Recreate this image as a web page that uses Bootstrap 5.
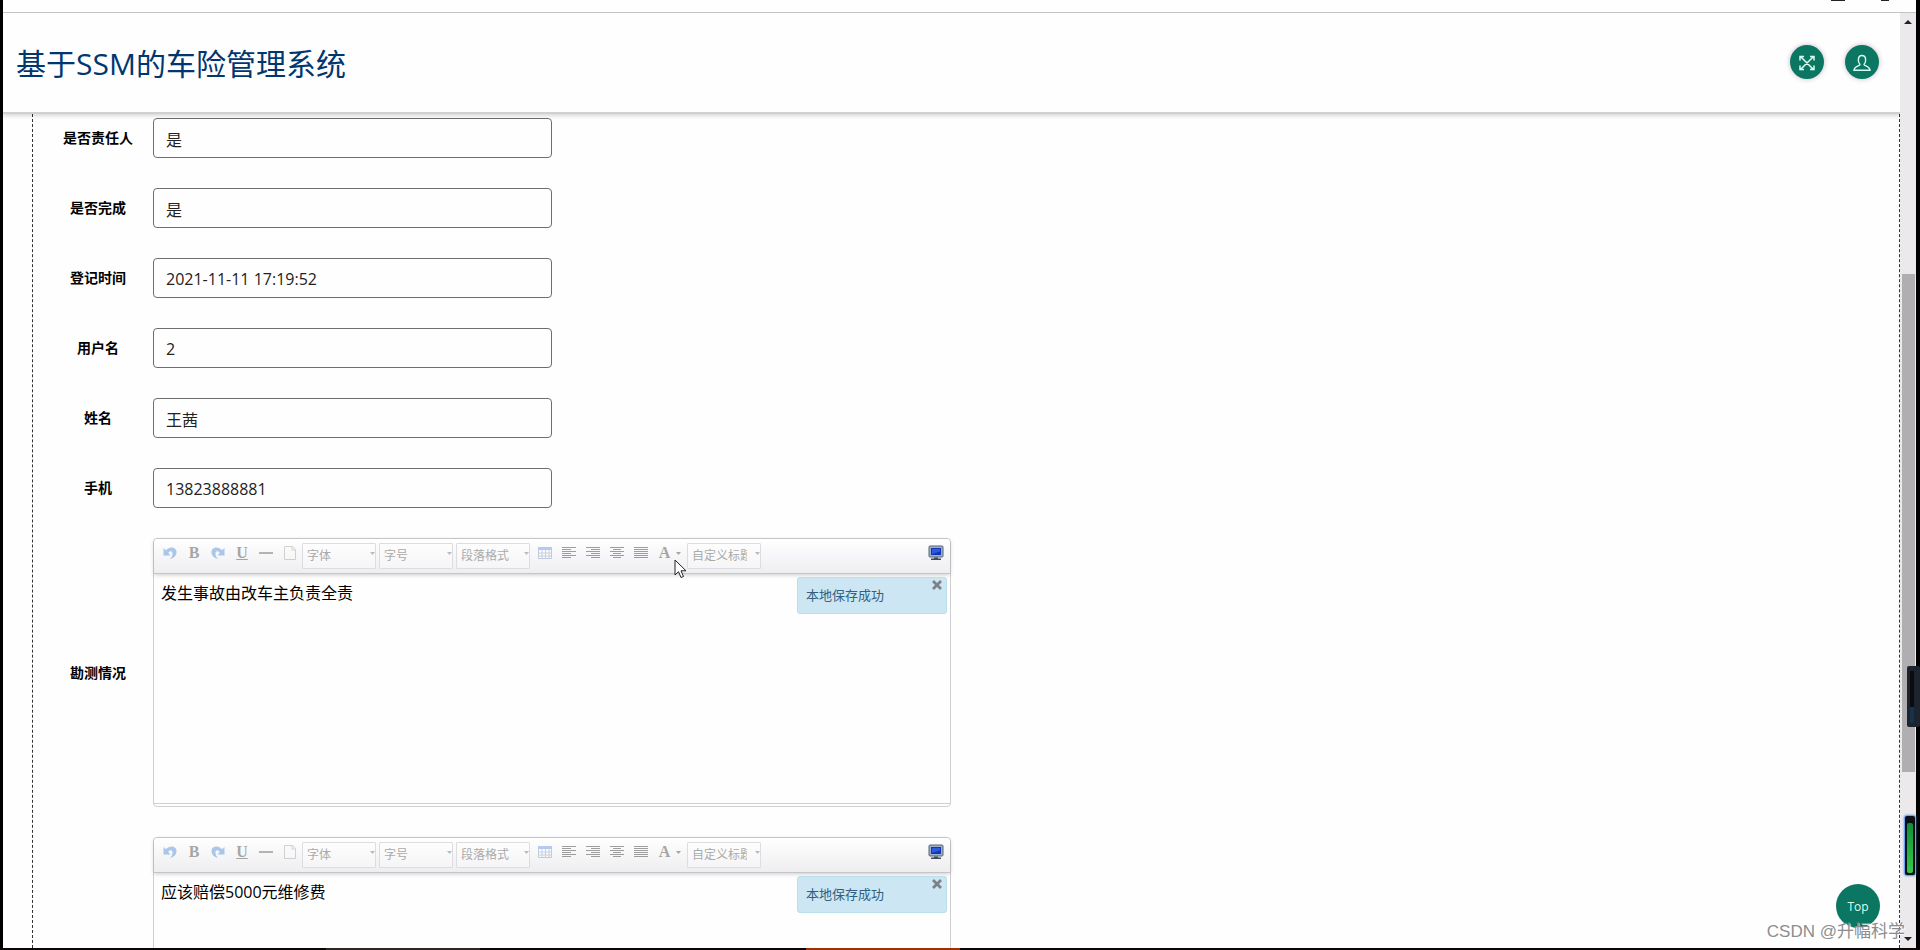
<!DOCTYPE html>
<html lang="zh-CN">
<head>
<meta charset="utf-8">
<meta name="viewport" content="width=device-width, initial-scale=1">
<title>基于SSM的车险管理系统</title>
<link href="https://cdn.jsdelivr.net/npm/bootstrap@5.3.0/dist/css/bootstrap.min.css" rel="stylesheet">
<style>
  body { font-family: "Open Sans", "Noto Sans CJK SC", sans-serif; color: #000; background: #000; }
  .screen { background: #fefefe; margin-left: 3px; margin-right: 4px; min-height: 0; }
  .browser-edge { height: 13px; border-bottom: 1px solid #c4c4c8; flex: none; }
  .tab-bits { gap: 36px; padding-right: 27px; }
  .tab-bits i { width: 8px; height: 1px; background: #222; }
  .tab-bits i:first-child { width: 14px; }
  .site-header { height: 101px; padding: 0 21px 0 13px; background: #fefefe; border-bottom: 2px solid #d0d0d0; box-shadow: 0 2px 4px rgba(0,0,0,.15); z-index: 2; }
  .site-title { font-size: 30px; line-height: 40px; color: #003770; margin: 0; padding-top: 2px; }
  .header-actions { gap: 21px; padding-bottom: 2px; }
  .round-btn { width: 34px; height: 34px; padding: 0; border: 0; border-radius: 50%; background: #0b7763; color: #d8fff4; box-shadow: 0 0 5px rgba(60,20,60,.3); }
  .form-panel { margin-left: 29px; padding: 4px 0 0; border: dashed #333; border-width: 0 1px; }
  .field { margin-bottom: 30px; }
  .field-label { width: 120px; padding-left: 10px; text-align: center; font-size: 14px; font-weight: 700; line-height: 20px; flex: none; }
  .text-field { width: 399px; height: 40px; border: 1px solid #6e6e72; border-radius: 4px; padding: 1px 12px 0; font-size: 16px; color: #222; background: #fefefe; }
  .editor { width: 798px; border: 1px solid #d0ced2; border-radius: 4px; background: #fefefe; flex: none; }
  .editor-tools { height: 35px; padding: 0 2px 6px 4px; background: linear-gradient(#fff, #eeedf0); border-bottom: 1px solid #c6c4c8; border-radius: 4px 4px 0 0; box-shadow: 0 1px 4px rgba(0,0,0,.2); }
  .tool { width: 24px; height: 24px; padding: 0; border: 0; background: none; opacity: .5; display: flex; align-items: center; justify-content: center; flex: none; }
  .tool.split { width: 34px; gap: 6px; }
  .tool.full { opacity: 1; }
  .tool-serif { font: 700 16px/20px "Liberation Serif", serif; color: #555; }
  .combo { width: 74px; height: 26px; margin: 3px 3px 0 0; position: relative; flex: none; }
  .combo select { width: 100%; height: 100%; padding: 0 13px 0 4px; border: 1px solid #dddce0; border-radius: 1px; background: rgba(255,255,255,.35); color: #aaa; font-size: 12px; line-height: 24px; appearance: none; }
  .combo svg { position: absolute; right: 1px; top: 10px; color: #bbb; }
  .editor-body { height: 230px; border-bottom: 1px solid #d0ced2; margin-bottom: 2px; padding: 7px; font-size: 16px; line-height: 24px; position: relative; }
  .notice { position: absolute; top: 3px; right: 3px; width: 150px; height: 37px; padding: 0 8px; border: 1px solid #b9dfea; border-radius: 3px; background: #cde6f3; color: #31617f; font-size: 13px; line-height: 34px; }
  .notice button { position: absolute; top: 1px; right: 3px; width: 12px; height: 12px; padding: 0; border: 0; background: none; display: flex; }
  .scroll-rail { width: 16px; background: #ebe9ec; flex: none; }
  .scroll-thumb { height: 498px; margin: 250px 1px 0 2px; background: #b0aeb1; }
  .scroll-arrow { width: 0; border: 4px solid transparent; }
  .arrow-up { border-bottom-color: #222; border-top: 0; margin: 7px auto 0 4px; }
  .arrow-down { border-top-color: #222; border-bottom: 0; margin: auto auto 7px 4px; }
  .gadget { position: absolute; border-radius: 2px; }
  .gadget-dark { top: 666px; right: 0; width: 13px; height: 61px; background: #1d242e; padding: 5px 6px 4px 3px; }
  .gadget-dark div { height: 100%; background: linear-gradient(#0a0c0f 70%, #17324c 70%); }
  .gadget-green { top: 816px; right: 5px; width: 10px; height: 59px; background: #0c1014; box-shadow: 0 0 2px 1px #3c8df0; padding: 7px 2px 2px; }
  .gadget-green div { height: 100%; background: linear-gradient(#0f9038, #37c94a); border-radius: 2px; }
  .to-top { position: absolute; right: 40px; bottom: 22px; width: 44px; height: 44px; padding: 2px 0 0; border: 0; border-radius: 50%; background: #0b7763; color: #d8fff4; font-size: 12px; z-index: 3; }
  .credit { position: absolute; right: 15px; bottom: 6px; font-family: "Liberation Sans", "Noto Sans CJK SC", sans-serif; font-size: 17px; line-height: 24px; color: #8d8d8f; text-shadow: 1px 1px 1px #fff; z-index: 3; }
  .task-strip { height: 2px; background: #0a0506; flex: none; }
  .task-strip .dim { width: 8%; margin-left: 17%; background: #2c2627; }
  .task-strip .hot { width: 8%; margin-left: 17%; background: #9a3206; }
  .pointer { position: absolute; left: 520px; top: 20px; z-index: 3; }
</style>
</head>
<body>
<svg class="d-none">
  <symbol id="i-undo" viewBox="0 0 16 16"><path d="M1.500 3v7.500h7L6.200 8C8 5.500 10.500 6 10.500 8.500c0 2.500-1 4-2.500 5.500 4-.8 6.500-3.500 6.500-7C14.500 1.800 7.500.8 4 5.300z" fill="#5d97dc"/></symbol>
  <symbol id="i-redo" viewBox="0 0 16 16"><path d="M14.500 3v7.500h-7L9.800 8C8 5.500 5.500 6 5.500 8.500c0 2.500 1 4 2.500 5.500-4-.8-6.500-3.500-6.500-7C1.500 1.800 8.500.8 12 5.300z" fill="#5d97dc"/></symbol>
  <symbol id="i-line" viewBox="0 0 16 16"><path d="M1 8h14" stroke="#444" stroke-width="1.500"/></symbol>
  <symbol id="i-page" viewBox="0 0 16 16"><path d="M2.500 1.500h8l3 3v10h-11zM10 1.500v3.500h3.500" fill="#fafafa" stroke="#aaa"/></symbol>
  <symbol id="i-table" viewBox="0 0 16 16"><path d="M1.500 2.500h13v11h-13z" fill="#fff" stroke="#8aa0c8"/><path d="M1 2h14v3H1z" fill="#6f9be8"/><path d="M1.500 8h13M1.500 11h13M5 5v8.500M8.500 5v8.500M12 5v8.500" stroke="#98a8c8"/></symbol>
  <symbol id="i-left" viewBox="0 0 16 16"><path d="M1 2.500h14M1 4.500h9M1 6.500h14M1 8.500h9M1 10.500h14M1 12.500h9" stroke="#444"/></symbol>
  <symbol id="i-right" viewBox="0 0 16 16"><path d="M1 2.500h14M6 4.500h9M1 6.500h14M6 8.500h9M1 10.500h14M6 12.500h9" stroke="#444"/></symbol>
  <symbol id="i-center" viewBox="0 0 16 16"><path d="M1 2.500h14M4 4.500h8M1 6.500h14M4 8.500h8M1 10.500h14M4 12.500h8" stroke="#444"/></symbol>
  <symbol id="i-justify" viewBox="0 0 16 16"><path d="M1 2.500h14M1 4.500h14M1 6.500h14M1 8.500h14M1 10.500h14M1 12.500h14" stroke="#444"/></symbol>
  <symbol id="i-screen" viewBox="0 0 16 16"><rect x="1" y="1" width="14" height="11" rx="1" fill="#9fb0c8" stroke="#56657c"/><path d="M3 3h10v7H3z" fill="#1237b0"/><path d="M4 4h8v2.500L4 9z" fill="#2c5be0"/><path d="M6 12.500h4v1H6zM3 13.500h10V15H3z" fill="#3e4c58"/></symbol>
  <symbol id="i-close" viewBox="0 0 12 12"><path d="M2 2l8 8M10 2l-8 8" stroke="#7d8086" stroke-width="2.800"/></symbol>
  <symbol id="i-caret" viewBox="0 0 5 3"><path d="M0 0h5L2.500 3z" fill="currentColor"/></symbol>
</svg>

<div class="vh-100 d-flex flex-column overflow-hidden position-relative">
  <div class="screen flex-fill d-flex flex-column overflow-hidden">
    <div class="browser-edge"><div class="tab-bits d-flex justify-content-end"><i></i><i></i></div></div>
    <div class="d-flex flex-fill overflow-hidden">
      <div class="flex-fill d-flex flex-column overflow-hidden">
        <header class="site-header d-flex align-items-center justify-content-between flex-shrink-0 position-relative">
          <h1 class="site-title fw-normal">基于SSM的车险管理系统</h1>
          <div class="header-actions d-flex">
            <button class="round-btn" type="button" aria-label="全屏"><svg width="16" height="16" viewBox="0 0 16 16" fill="none" stroke="currentColor" stroke-width="1.500"><path d="M2 2l12 12M14 2L2 14M1 5.500V1.500h4M11 1.500h4v4M15 10.500v4h-4M5 14.500H1v-4"/></svg></button>
            <button class="round-btn" type="button" aria-label="用户"><svg width="18" height="18" viewBox="0 0 18 18" fill="none" stroke="currentColor" stroke-width="1.400"><path d="M7 10.500C4.500 8 4.500 1.500 9 1.500s4.500 6.500 2 9c0 1.500 5.800 1.500 6 5.700H1c.2-4.200 6-4.200 6-5.700z"/></svg></button>
          </div>
        </header>
        <main class="form-panel flex-fill overflow-hidden">
          <form>
            <div class="field d-flex align-items-center"><label class="field-label" for="f1">是否责任人</label><input class="form-control text-field" id="f1" value="是"></div>
            <div class="field d-flex align-items-center"><label class="field-label" for="f2">是否完成</label><input class="form-control text-field" id="f2" value="是"></div>
            <div class="field d-flex align-items-center"><label class="field-label" for="f3">登记时间</label><input class="form-control text-field" id="f3" value="2021-11-11 17:19:52"></div>
            <div class="field d-flex align-items-center"><label class="field-label" for="f4">用户名</label><input class="form-control text-field" id="f4" value="2"></div>
            <div class="field d-flex align-items-center"><label class="field-label" for="f5">姓名</label><input class="form-control text-field" id="f5" value="王茜"></div>
            <div class="field d-flex align-items-center"><label class="field-label" for="f6">手机</label><input class="form-control text-field" id="f6" value="13823888881"></div>

            <div class="field d-flex align-items-center">
              <span class="field-label">勘测情况</span>
              <div class="editor position-relative">
                <div class="editor-tools d-flex align-items-center position-relative">
                  <button class="tool" type="button" aria-label="撤销"><svg width="16" height="16"><use href="#i-undo"/></svg></button>
                  <button class="tool tool-serif" type="button">B</button>
                  <button class="tool" type="button" aria-label="重做"><svg width="16" height="16"><use href="#i-redo"/></svg></button>
                  <button class="tool tool-serif text-decoration-underline" type="button">U</button>
                  <button class="tool" type="button" aria-label="分隔线"><svg width="16" height="16"><use href="#i-line"/></svg></button>
                  <button class="tool" type="button" aria-label="清空"><svg width="16" height="16"><use href="#i-page"/></svg></button>
                  <div class="combo"><select aria-label="字体"><option>字体</option></select><svg width="5" height="3"><use href="#i-caret"/></svg></div>
                  <div class="combo"><select aria-label="字号"><option>字号</option></select><svg width="5" height="3"><use href="#i-caret"/></svg></div>
                  <div class="combo"><select aria-label="段落格式"><option>段落格式</option></select><svg width="5" height="3"><use href="#i-caret"/></svg></div>
                  <button class="tool" type="button" aria-label="表格"><svg width="16" height="16"><use href="#i-table"/></svg></button>
                  <button class="tool" type="button" aria-label="左对齐"><svg width="16" height="16"><use href="#i-left"/></svg></button>
                  <button class="tool" type="button" aria-label="右对齐"><svg width="16" height="16"><use href="#i-right"/></svg></button>
                  <button class="tool" type="button" aria-label="居中"><svg width="16" height="16"><use href="#i-center"/></svg></button>
                  <button class="tool" type="button" aria-label="两端对齐"><svg width="16" height="16"><use href="#i-justify"/></svg></button>
                  <button class="tool split tool-serif" type="button">A<svg width="5" height="3"><use href="#i-caret"/></svg></button>
                  <div class="combo"><select aria-label="自定义标题"><option>自定义标题</option></select><svg width="5" height="3"><use href="#i-caret"/></svg></div>
                  <button class="tool full ms-auto" type="button" aria-label="全屏编辑"><svg width="16" height="16"><use href="#i-screen"/></svg></button>
                </div>
                <div class="editor-body">发生事故由改车主负责全责
                  <div class="notice">本地保存成功<button type="button" aria-label="关闭"><svg width="12" height="12"><use href="#i-close"/></svg></button></div>
                </div>
                <svg class="pointer" width="14" height="20" viewBox="0 0 14 20"><path d="M1 1v15l3.500-3.300L7 18.500l2.500-1-2.500-5.700h5z" fill="#fff" stroke="#222"/></svg>
              </div>
            </div>

            <div class="field d-flex align-items-center">
              <span class="field-label"></span>
              <div class="editor">
                <div class="editor-tools d-flex align-items-center position-relative">
                  <button class="tool" type="button" aria-label="撤销"><svg width="16" height="16"><use href="#i-undo"/></svg></button>
                  <button class="tool tool-serif" type="button">B</button>
                  <button class="tool" type="button" aria-label="重做"><svg width="16" height="16"><use href="#i-redo"/></svg></button>
                  <button class="tool tool-serif text-decoration-underline" type="button">U</button>
                  <button class="tool" type="button" aria-label="分隔线"><svg width="16" height="16"><use href="#i-line"/></svg></button>
                  <button class="tool" type="button" aria-label="清空"><svg width="16" height="16"><use href="#i-page"/></svg></button>
                  <div class="combo"><select aria-label="字体"><option>字体</option></select><svg width="5" height="3"><use href="#i-caret"/></svg></div>
                  <div class="combo"><select aria-label="字号"><option>字号</option></select><svg width="5" height="3"><use href="#i-caret"/></svg></div>
                  <div class="combo"><select aria-label="段落格式"><option>段落格式</option></select><svg width="5" height="3"><use href="#i-caret"/></svg></div>
                  <button class="tool" type="button" aria-label="表格"><svg width="16" height="16"><use href="#i-table"/></svg></button>
                  <button class="tool" type="button" aria-label="左对齐"><svg width="16" height="16"><use href="#i-left"/></svg></button>
                  <button class="tool" type="button" aria-label="右对齐"><svg width="16" height="16"><use href="#i-right"/></svg></button>
                  <button class="tool" type="button" aria-label="居中"><svg width="16" height="16"><use href="#i-center"/></svg></button>
                  <button class="tool" type="button" aria-label="两端对齐"><svg width="16" height="16"><use href="#i-justify"/></svg></button>
                  <button class="tool split tool-serif" type="button">A<svg width="5" height="3"><use href="#i-caret"/></svg></button>
                  <div class="combo"><select aria-label="自定义标题"><option>自定义标题</option></select><svg width="5" height="3"><use href="#i-caret"/></svg></div>
                  <button class="tool full ms-auto" type="button" aria-label="全屏编辑"><svg width="16" height="16"><use href="#i-screen"/></svg></button>
                </div>
                <div class="editor-body">应该赔偿5000元维修费
                  <div class="notice">本地保存成功<button type="button" aria-label="关闭"><svg width="12" height="12"><use href="#i-close"/></svg></button></div>
                </div>
              </div>
            </div>
          </form>
        </main>
      </div>
      <div class="scroll-rail d-flex flex-column">
        <div class="scroll-arrow arrow-up"></div>
        <div class="scroll-thumb"></div>
        <div class="scroll-arrow arrow-down"></div>
      </div>
    </div>
  </div>
  <div class="task-strip d-flex"><div class="dim"></div><div class="hot"></div></div>
  <div class="gadget gadget-dark"><div></div></div>
  <div class="gadget gadget-green"><div></div></div>
  <button class="to-top" type="button">Top</button>
  <div class="credit">CSDN @升幅科学</div>
</div>
<script src="https://cdn.jsdelivr.net/npm/bootstrap@5.3.0/dist/js/bootstrap.bundle.min.js"></script>
</body>
</html>
